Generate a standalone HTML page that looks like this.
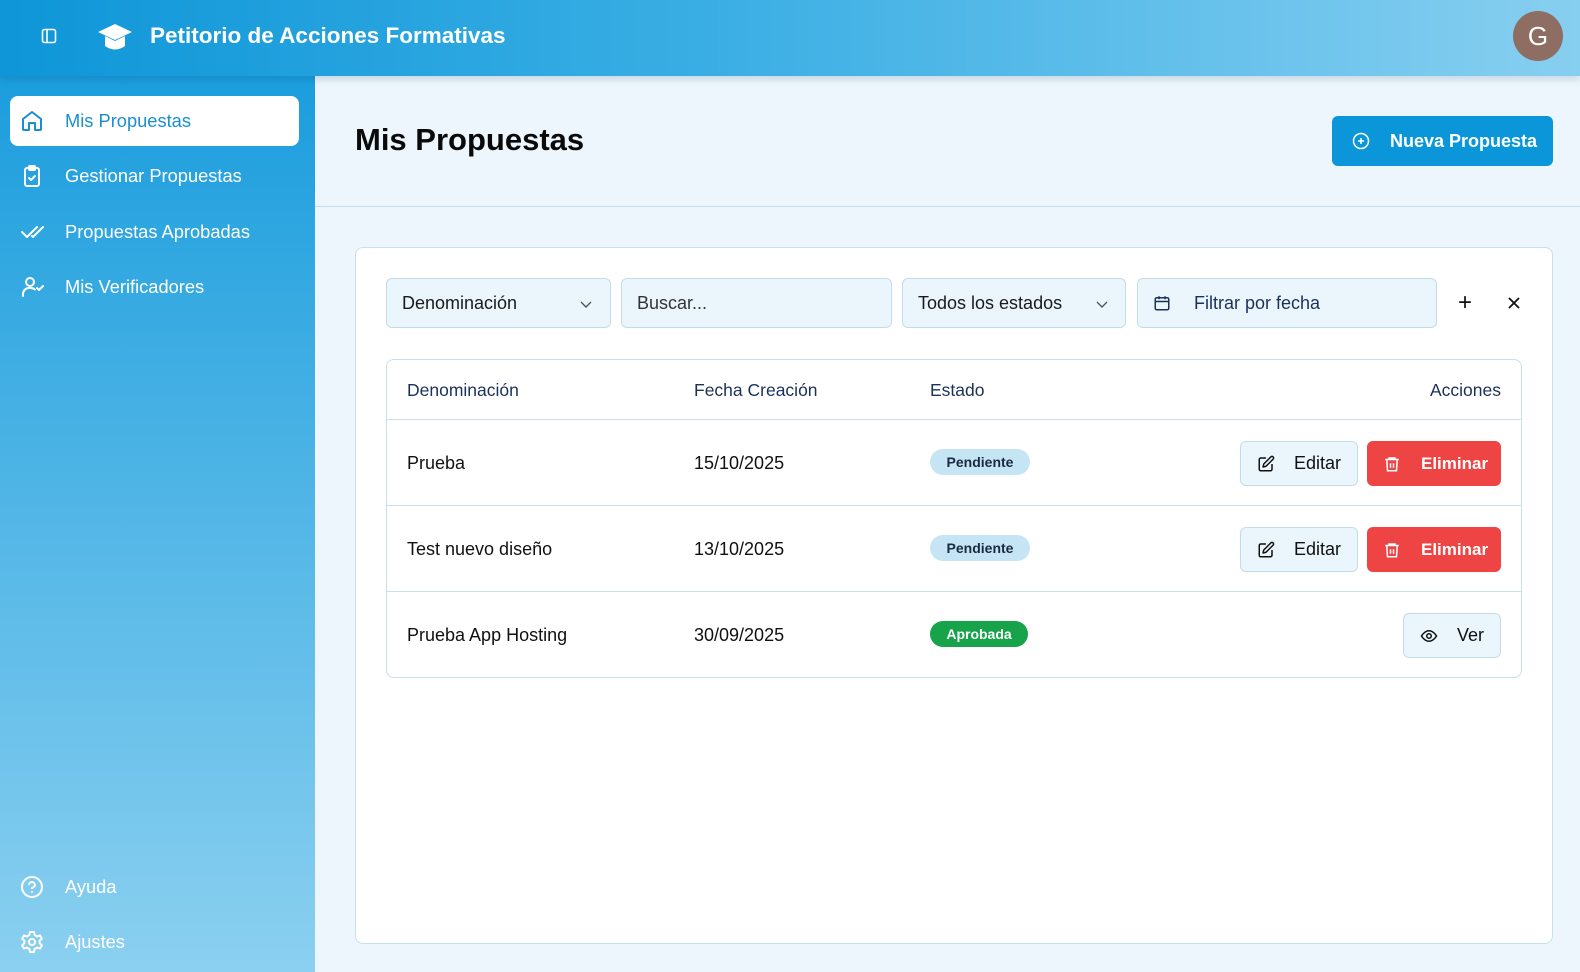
<!DOCTYPE html>
<html><head><meta charset="utf-8"><style>
*{box-sizing:border-box;margin:0;padding:0}
body{width:1580px;height:972px;overflow:hidden;font-family:"Liberation Sans",sans-serif;background:#ecf6fc;position:relative}
.hdr{position:absolute;left:0;top:0;width:1580px;height:76px;background:linear-gradient(90deg,#0e96d8,#3aaee4 45%,#87cff0);box-shadow:0 3px 8px rgba(0,60,100,.18);z-index:2}
.side{position:absolute;left:0;top:76px;width:315px;height:896px;background:linear-gradient(180deg,#1b9ddd,#8bd0f0)}
.abs{position:absolute}
.nav{position:absolute;left:10px;width:289px;height:50px;display:flex;align-items:center;color:#fff;font-size:18.3px}
.nav svg{position:absolute;left:10px}
.nav span{position:absolute;left:55px}
.act{background:#fff;border-radius:8px;color:#1a8fd0}
.inp{position:absolute;top:278px;height:50px;border:1px solid #c4dcea;background:#eaf6fc;border-radius:6px;font-size:18px;color:#1a1a1a;display:flex;align-items:center;padding-left:15px}
.th{position:absolute;font-size:17.5px;color:#1c3158}
.td{position:absolute;font-size:18px;color:#111}
.badge{position:absolute;left:930px;height:26px;border-radius:13px;font-size:14px;font-weight:bold;display:flex;align-items:center;justify-content:center}
.btn{position:absolute;height:45px;border-radius:6px;display:flex;align-items:center;font-size:18px}
.ed{left:1240px;width:118px;background:#eaf6fc;border:1px solid #c4dcea;color:#111}
.el{left:1367px;width:134px;background:#ef4444;color:#fff;font-weight:bold;font-size:17px}
.line{position:absolute;left:386px;width:1136px;height:1px;background:#c8dfec}
</style></head><body>
<div class="hdr">
 <svg class="abs" style="left:41px;top:28px" width="16" height="16" viewBox="0 0 16 16" fill="none" stroke="#fff" stroke-width="1.6"><rect x="1.5" y="1.5" width="13" height="13" rx="2"/><line x1="6" y1="1.5" x2="6" y2="14.5"/></svg>
 <svg class="abs" style="left:97px;top:22px" width="36" height="30" viewBox="0 0 36 30"><path d="M18 2 L35 10 L18 18 L1 10Z" fill="#fff"/><path d="M8 14 L8 24 Q18 31 28 24 L28 14 L18 19Z" fill="#fff"/></svg>
 <div class="abs" style="left:150px;top:23px;color:#fff;font-size:22.5px;font-weight:bold">Petitorio de Acciones Formativas</div>
 <div class="abs" style="left:1513px;top:11px;width:50px;height:50px;border-radius:50%;background:#8e6e62;color:#fff;font-size:26px;display:flex;align-items:center;justify-content:center">G</div>
</div>
<div class="side"></div>
<div class="nav act" style="top:96px"><svg width="24" height="24" viewBox="0 0 24 24" fill="none" stroke="#1a8fd0" stroke-width="2" stroke-linejoin="round"><path d="M3 10l9-7 9 7v10a1 1 0 0 1-1 1h-5v-7h-6v7H4a1 1 0 0 1-1-1z"/></svg><span>Mis Propuestas</span></div>
<div class="nav" style="top:151px"><svg width="24" height="24" viewBox="0 0 24 24" fill="none" stroke="#fff" stroke-width="2" stroke-linecap="round" stroke-linejoin="round"><rect x="5" y="4" width="14" height="18" rx="2"/><rect x="9" y="2" width="6" height="4" rx="1"/><path d="M9 14l2 2 4-4"/></svg><span>Gestionar Propuestas</span></div>
<div class="nav" style="top:207px"><svg width="26" height="24" viewBox="0 0 26 24" fill="none" stroke="#fff" stroke-width="2" stroke-linecap="round" stroke-linejoin="round"><path d="M2 12l5 5L17 7"/><path d="M12 16l1 1L23 7"/></svg><span>Propuestas Aprobadas</span></div>
<div class="nav" style="top:262px"><svg width="26" height="24" viewBox="0 0 26 24" fill="none" stroke="#fff" stroke-width="2" stroke-linecap="round" stroke-linejoin="round"><circle cx="10" cy="7" r="4"/><path d="M3 21v-2a6 6 0 0 1 6-6h2a6 6 0 0 1 4 1.5"/><path d="M17 13l2 2 4-4"/></svg><span>Mis Verificadores</span></div>
<div class="nav" style="top:862px"><svg width="24" height="24" viewBox="0 0 24 24" fill="none" stroke="#fff" stroke-width="2" stroke-linecap="round"><circle cx="12" cy="12" r="10"/><path d="M9.1 9a3 3 0 0 1 5.8 1c0 2-3 3-3 3"/><line x1="12" y1="17" x2="12" y2="17"/></svg><span>Ayuda</span></div>
<div class="nav" style="top:917px"><svg width="24" height="24" viewBox="0 0 24 24" fill="none" stroke="#fff" stroke-width="2" stroke-linejoin="round"><path d="M10 2h4l.6 3 2.4 1.4 2.9-1 2 3.4-2.3 2v2.4l2.3 2-2 3.4-2.9-1L14.6 19 14 22h-4l-.6-3-2.4-1.4-2.9 1-2-3.4 2.3-2v-2.4l-2.3-2 2-3.4 2.9 1L9.4 5z"/><circle cx="12" cy="12" r="3"/></svg><span>Ajustes</span></div>

<div class="abs" style="left:355px;top:122px;font-size:31px;font-weight:bold;color:#0a0a0a">Mis Propuestas</div>
<div class="abs" style="left:1332px;top:116px;width:221px;height:50px;background:#0b96d9;border-radius:6px;color:#fff;font-size:18px;font-weight:bold;display:flex;align-items:center"><svg style="margin-left:20px" width="18" height="18" viewBox="0 0 24 24" fill="none" stroke="#fff" stroke-width="2"><circle cx="12" cy="12" r="10"/><path d="M12 8v8M8 12h8"/></svg><span style="margin-left:20px">Nueva Propuesta</span></div>
<div class="abs" style="left:315px;top:206px;width:1265px;height:1px;background:#c2dced"></div>

<div class="abs" style="left:355px;top:247px;width:1198px;height:697px;background:#fff;border:1px solid #c6e0ee;border-radius:8px"></div>
<div class="inp" style="left:386px;width:225px">Denominación<svg class="abs" style="left:192px;top:18px" width="14" height="14" viewBox="0 0 14 14" fill="none" stroke="#555" stroke-width="1.4"><path d="M2 5l5 5 5-5"/></svg></div>
<div class="inp" style="left:621px;width:271px;color:#333">Buscar...</div>
<div class="inp" style="left:902px;width:224px">Todos los estados<svg class="abs" style="left:192px;top:18px" width="14" height="14" viewBox="0 0 14 14" fill="none" stroke="#555" stroke-width="1.4"><path d="M2 5l5 5 5-5"/></svg></div>
<div class="inp" style="left:1137px;width:300px;color:#1c3158"><svg width="18" height="18" viewBox="0 0 24 24" fill="none" stroke="#1c3158" stroke-width="2"><rect x="3" y="5" width="18" height="16" rx="2"/><path d="M3 10h18M8 3v4M16 3v4"/></svg><span style="margin-left:23px">Filtrar por fecha</span></div>
<div class="abs" style="left:1458px;top:289px;font-size:24px;color:#111">+</div>
<svg class="abs" style="left:1507px;top:296px" width="14" height="14" viewBox="0 0 14 14" stroke="#111" stroke-width="1.8"><path d="M2 2l10 10M12 2L2 12"/></svg>

<div class="abs" style="left:386px;top:359px;width:1136px;height:319px;border:1px solid #c8dfec;border-radius:8px"></div>
<div class="th" style="left:407px;top:380px">Denominación</div>
<div class="th" style="left:694px;top:380px">Fecha Creación</div>
<div class="th" style="left:930px;top:380px">Estado</div>
<div class="th" style="right:79px;top:380px">Acciones</div>
<div class="line" style="top:419px"></div>
<div class="line" style="top:505px"></div>
<div class="line" style="top:591px"></div>

<div class="td" style="left:407px;top:453px">Prueba</div>
<div class="td" style="left:694px;top:453px">15/10/2025</div>
<div class="badge" style="top:449px;width:100px;background:#c6e5f4;color:#1a2a40">Pendiente</div>
<div class="btn ed" style="top:441px"><svg style="margin-left:16px" width="18" height="18" viewBox="0 0 24 24" fill="none" stroke="#111" stroke-width="2" stroke-linejoin="round"><path d="M12 4H5a2 2 0 0 0-2 2v13a2 2 0 0 0 2 2h13a2 2 0 0 0 2-2v-7"/><path d="M18.5 2.5a2.1 2.1 0 0 1 3 3L12 15l-4 1 1-4z"/></svg><span style="margin-left:19px">Editar</span></div>
<div class="btn el" style="top:441px"><svg style="margin-left:16px" width="18" height="18" viewBox="0 0 24 24" fill="none" stroke="#fff" stroke-width="2"><path d="M3 6h18M8 6V4h8v2M5 6l1 15h12l1-15M10 11v6M14 11v6"/></svg><span style="margin-left:20px">Eliminar</span></div>

<div class="td" style="left:407px;top:539px">Test nuevo diseño</div>
<div class="td" style="left:694px;top:539px">13/10/2025</div>
<div class="badge" style="top:535px;width:100px;background:#c6e5f4;color:#1a2a40">Pendiente</div>
<div class="btn ed" style="top:527px"><svg style="margin-left:16px" width="18" height="18" viewBox="0 0 24 24" fill="none" stroke="#111" stroke-width="2" stroke-linejoin="round"><path d="M12 4H5a2 2 0 0 0-2 2v13a2 2 0 0 0 2 2h13a2 2 0 0 0 2-2v-7"/><path d="M18.5 2.5a2.1 2.1 0 0 1 3 3L12 15l-4 1 1-4z"/></svg><span style="margin-left:19px">Editar</span></div>
<div class="btn el" style="top:527px"><svg style="margin-left:16px" width="18" height="18" viewBox="0 0 24 24" fill="none" stroke="#fff" stroke-width="2"><path d="M3 6h18M8 6V4h8v2M5 6l1 15h12l1-15M10 11v6M14 11v6"/></svg><span style="margin-left:20px">Eliminar</span></div>

<div class="td" style="left:407px;top:625px">Prueba App Hosting</div>
<div class="td" style="left:694px;top:625px">30/09/2025</div>
<div class="badge" style="top:621px;width:98px;background:#16a34a;color:#fff">Aprobada</div>
<div class="btn ed" style="top:613px;left:1403px;width:98px"><svg style="margin-left:16px" width="18" height="18" viewBox="0 0 24 24" fill="none" stroke="#111" stroke-width="2"><path d="M2 12s4-7 10-7 10 7 10 7-4 7-10 7S2 12 2 12z"/><circle cx="12" cy="12" r="3"/></svg><span style="margin-left:19px">Ver</span></div>
</body></html>
